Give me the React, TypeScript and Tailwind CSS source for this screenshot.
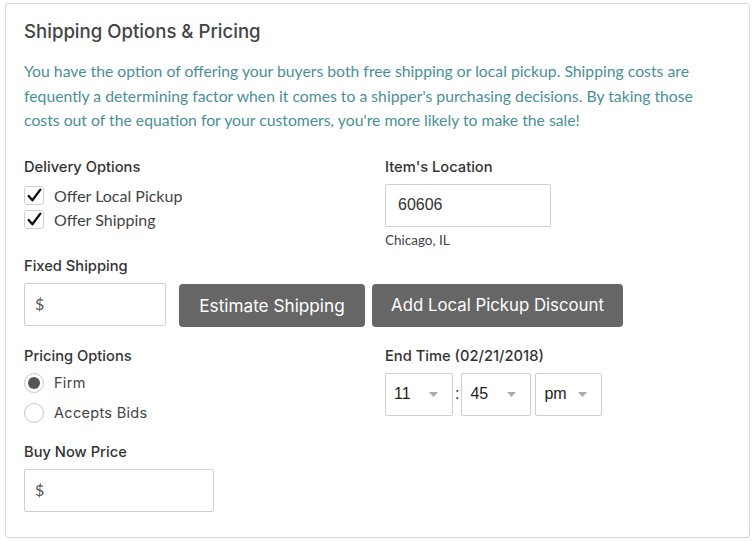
import React from "react";

function Check() {
  return (
    <span className="flex h-[19px] w-[20px] items-center justify-center rounded-[3px] border border-[#cfcfcf] bg-white">
      <svg width="17" height="15" viewBox="0 0 16 14">
        <path d="M2.5 7.5 L6 11.5 L13.5 1.5" fill="none" stroke="#111" strokeWidth="2.2" strokeLinecap="round" strokeLinejoin="round" />
      </svg>
    </span>
  );
}

function Radio({ on }: { on?: boolean }) {
  return (
    <span className="flex h-[20px] w-[20px] items-center justify-center rounded-full border border-[#c8c8c8] bg-white">
      {on && <span className="h-[12px] w-[12px] rounded-full bg-[#555]" />}
    </span>
  );
}

function Select({ value, w }: { value: string; w: string }) {
  return (
    <div className={`flex h-[43px] items-center justify-between rounded-[2px] border border-[#cfcfcf] bg-white pl-[8px] pr-[14px] ${w}`}>
      <span className="font-['Liberation_Sans',Arial,sans-serif] text-[16px] text-[#222]">{value}</span>
      <svg width="9" height="5" viewBox="0 0 9 5"><path d="M0 0 H9 L4.5 5 Z" fill="#aaa" /></svg>
    </div>
  );
}

function Label({ children, className = "" }: { children: React.ReactNode; className?: string }) {
  return (
    <div className={`h-[20px] font-['Inter',sans-serif] text-[14.7px] font-medium leading-[20px] text-[#333] ${className}`}>
      {children}
    </div>
  );
}

export default function App() {
  return (
    <div className="h-[542px] w-[756px] bg-white pl-[5px] pt-[3px]">
      <div className="h-[535px] w-[745px] rounded-[3px] border border-[#d6d6d6] px-[18px] pt-[15px]">
        <h1 className="h-[24px] font-['Inter',sans-serif] text-[18.6px] font-medium leading-[24px] text-[#444]">
          Shipping Options &amp; Pricing
        </h1>
        <p className="mt-[16px] max-w-[682px] font-['Lato',sans-serif] text-[15.75px] leading-[24.5px] text-[#4b8f95]">
          You have the option of offering your buyers both free shipping or local pickup. Shipping costs are fequently a determining factor when it comes to a shipper's purchasing decisions. By taking those costs out of the equation for your customers, you're more likely to make the sale!
        </p>

        <div className="mt-[24px] grid grid-cols-[361px_1fr]">
          <div>
            <Label>Delivery Options</Label>
            <div className="mt-[7px] flex flex-col font-['Lato',sans-serif]">
              <label className="flex h-[24px] items-center gap-[10px] text-[16px] text-[#444]">
                <Check />
                Offer Local Pickup
              </label>
              <label className="flex h-[24px] items-center gap-[10px] text-[16px] text-[#444]">
                <Check />
                Offer Shipping
              </label>
            </div>
          </div>
          <div>
            <Label>Item's Location</Label>
            <div className="mt-[7px] flex h-[43px] w-[166px] items-center rounded-[2px] border border-[#cfcfcf] bg-white pl-[12px] font-['Liberation_Sans',Arial,sans-serif] text-[16px] text-[#333]">
              60606
            </div>
            <div className="mt-[4px] h-[18px] font-['Lato',sans-serif] text-[13.5px] leading-[18px] text-[#444]">Chicago, IL</div>
          </div>
        </div>

        <Label className="mt-[7px]">Fixed Shipping</Label>
        <div className="mt-[7px] flex items-start">
          <div className="flex h-[43px] w-[142px] items-center rounded-[2px] border border-[#cfcfcf] bg-white pl-[10px] font-['Lato',sans-serif] text-[16px] text-[#555]">
            $
          </div>
          <button className="ml-[13px] mt-[1px] h-[43px] w-[186px] rounded-[4px] bg-[#666] pt-[2px] font-['Inter',sans-serif] text-[17.2px] text-white">
            Estimate Shipping
          </button>
          <button className="ml-[7px] mt-[1px] h-[43px] w-[251px] rounded-[4px] bg-[#666] pt-[2px] font-['Inter',sans-serif] text-[16.8px] text-white">
            Add Local Pickup Discount
          </button>
        </div>

        <div className="mt-[19px] grid grid-cols-[361px_1fr]">
          <div>
            <Label>Pricing Options</Label>
            <div className="mt-[2px] flex flex-col font-['Inter',sans-serif]">
              <label className="flex h-[30px] items-center gap-[10px] text-[14.5px] tracking-[0.3px] text-[#444]">
                <Radio on />
                Firm
              </label>
              <label className="flex h-[30px] items-center gap-[10px] text-[14.5px] tracking-[0.3px] text-[#444]">
                <Radio />
                Accepts Bids
              </label>
            </div>
            <Label className="mt-[14px]">Buy Now Price</Label>
            <div className="mt-[7px] flex h-[43px] w-[190px] items-center rounded-[2px] border border-[#cfcfcf] bg-white pl-[10px] font-['Lato',sans-serif] text-[16px] text-[#555]">
              $
            </div>
          </div>
          <div>
            <Label>End Time (02/21/2018)</Label>
            <div className="mt-[7px] flex items-center">
              <Select value="11" w="w-[68px]" />
              <span className="mx-[2px] font-['Liberation_Sans',Arial,sans-serif] text-[16px] text-[#222]">:</span>
              <Select value="45" w="w-[70px]" />
              <span className="w-[4px]" />
              <Select value="pm" w="w-[67px]" />
            </div>
          </div>
        </div>
      </div>
    </div>
  );
}
